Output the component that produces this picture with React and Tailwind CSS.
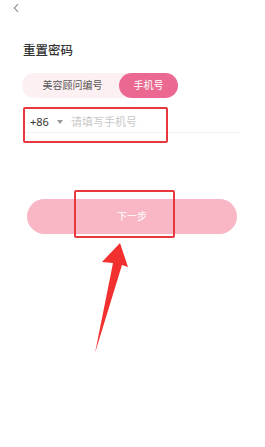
import { ChevronLeft } from "lucide-react";

const font = { fontFamily: '"Noto Sans", "Noto Sans CJK SC", sans-serif' };

export default function App() {
  return (
    <div className="relative w-[265px] h-[447px] bg-white overflow-hidden" style={font}>
      {/* top bar */}
      <div className="h-[14px] flex items-center pl-[9px] pt-[1px]">
        <ChevronLeft className="w-[14px] h-[14px] text-[#444]" strokeWidth={1.6} />
      </div>

      <div className="pl-[23px] pr-[25px]">
        <h1 className="mt-[30px] text-[12.5px] leading-[14px] font-medium text-[#333]">重置密码</h1>

        {/* tabs */}
        <div className="mt-[15px] ml-[-1px] w-[156px] h-[25px] rounded-full bg-[#fdf0f3] flex items-center">
          <div className="flex-1 text-center text-[10px] text-[#555] pl-[4px]">美容顾问编号</div>
          <div className="w-[59px] h-[25px] rounded-full bg-[#eb6890] flex items-center justify-center text-[10px] text-white">
            手机号
          </div>
        </div>

        {/* phone input */}
        <div className="mt-[16px] h-[16px] pb-[2px] box-content flex items-center border-b border-[#f3f3f3] pl-[7px]">
          <span className="text-[11px] text-[#333]">+86</span>
          <svg className="ml-[8px]" width="6" height="4" viewBox="0 0 6 4">
            <path d="M0 0h6L3 4z" fill="#999" />
          </svg>
          <span className="ml-[8px] text-[11px] text-[#c8c8c8]">请填写手机号</span>
        </div>

        {/* next button */}
        <div className="mt-[66px] ml-[4px] w-[210px] h-[35px] rounded-full bg-[#f9b7c5] flex items-center justify-center text-[10px] text-white">
          下一步
        </div>
      </div>

      {/* annotations */}
      <div className="absolute left-[23px] top-[107px] w-[145px] h-[36px] border-2 border-[#e8383d] rounded-[2px]" />
      <div className="absolute left-[74px] top-[190px] w-[101px] h-[48px] border-2 border-[#e8383d] rounded-[2px]" />
      <svg className="absolute left-0 top-0" width="265" height="447" viewBox="0 0 265 447">
        <path d="M120 243 L128 267 L122 265 L95 353 L113 263 L102 262 Z" fill="#f2302f" />
      </svg>
    </div>
  );
}
